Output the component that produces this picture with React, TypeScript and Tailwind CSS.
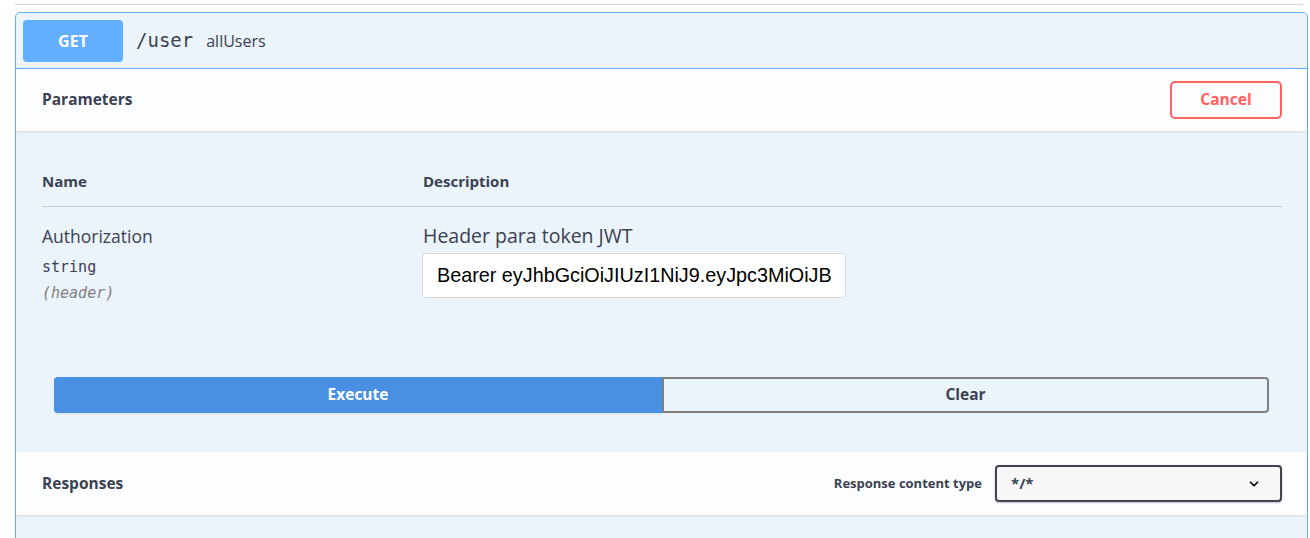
import { ChevronDown } from "lucide-react";

const mono = "font-['DejaVu_Sans_Mono',monospace]";

export default function App() {
  return (
    <div className="min-h-screen bg-white font-['Open_Sans',sans-serif] text-[#3b4151]">
      {/* tag section underline */}
      <div className="ml-[15px] mr-[7px] h-[5px] border-b border-[#d6d7da]" />

      <div className="mt-[7px] ml-[15px] mr-[2px] rounded-[5px] border border-[#61affe] bg-[#ebf3fb]">
        {/* summary */}
        <div className="flex h-[56px] items-center border-b border-[#61affe] px-[7px]">
          <span className="flex h-[42px] w-[100px] items-center justify-center rounded-[4px] bg-[#61affe] text-[16px] font-bold text-white">
            GET
          </span>
          <span className={`${mono} ml-[13px] text-[19px] text-[#3b4151]`}>/user</span>
          <span className="ml-[13px] text-[16px] text-[#3b4151]">allUsers</span>
        </div>

        {/* parameters header */}
        <div className="flex h-[62px] items-center justify-between bg-[#fcfdff] pl-[26px] pr-[25px] shadow-[0_1px_2px_rgba(0,0,0,0.1)]">
          <h4 className="text-[15.5px] font-bold">Parameters</h4>
          <button className="h-[38px] w-[112px] rounded-[5px] border-2 border-[#ff6060] bg-transparent text-[15.5px] font-bold text-[#ff6060]">
            Cancel
          </button>
        </div>

        {/* parameters table */}
        <div className="pl-[26px] pr-[25px] pt-[25px]">
          <div className="flex border-b border-[#c8cbd1] pt-[15px] pb-[15px] text-[15px] font-bold leading-[20px]">
            <div className="w-[381px]">Name</div>
            <div>Description</div>
          </div>
          <div className="flex pt-[17px]">
            <div className="w-[380px]">
              <div className="text-[17.5px] leading-[24px]">Authorization</div>
              <div className={`${mono} mt-[10px] text-[15px] leading-[18px]`}>string</div>
              <div className={`${mono} mt-[8px] text-[15px] italic leading-[18px] text-[#808080]`}>(header)</div>
            </div>
            <div>
              <div className="ml-[1px] text-[19.5px] leading-[24px] text-[#3b4151]">Header para token JWT</div>
              <input
                readOnly
                value="Bearer eyJhbGciOiJIUzI1NiJ9.eyJpc3MiOiJB"
                className="mt-[5px] h-[45px] w-[424px] rounded-[4px] border border-[#d9d9d9] bg-white pl-[14px] pr-[6px] font-['Liberation_Sans',Arial,sans-serif] text-[19.8px] text-black outline-none"
              />
            </div>
          </div>
        </div>

        {/* execute / clear */}
        <div className="flex px-[38px] pt-[75px] pb-[39px]">
          <button className="h-[36px] w-[608px] rounded-l-[4px] bg-[#4990e2] text-[15.5px] font-bold text-white shadow-[0_1px_2px_rgba(0,0,0,0.1)]">
            Execute
          </button>
          <button className="h-[36px] flex-1 rounded-r-[4px] border-2 border-[#808080] bg-transparent text-[15.5px] font-bold text-[#3b4151]">
            Clear
          </button>
        </div>

        {/* responses header */}
        <div className="flex h-[63px] items-center justify-between bg-[#fcfdff] pl-[26px] pr-[25px] shadow-[0_1px_2px_rgba(0,0,0,0.1)]">
          <h4 className="text-[15.5px] font-bold">Responses</h4>
          <div className="flex items-center">
            <span className="text-[13px] font-bold">Response content type</span>
            <div className="ml-[13px] flex h-[37px] w-[287px] items-center justify-between rounded-[4px] border-2 border-[#41444e] bg-[#f7f7f7] pl-[14px] pr-[19px] shadow-[0_1px_2px_rgba(0,0,0,0.25)]">
              <span className="text-[15px] font-bold">*/*</span>
              <ChevronDown className="h-[14px] w-[14px] text-black" strokeWidth={3} />
            </div>
          </div>
        </div>
        <div className="h-[40px]" />
      </div>
    </div>
  );
}
